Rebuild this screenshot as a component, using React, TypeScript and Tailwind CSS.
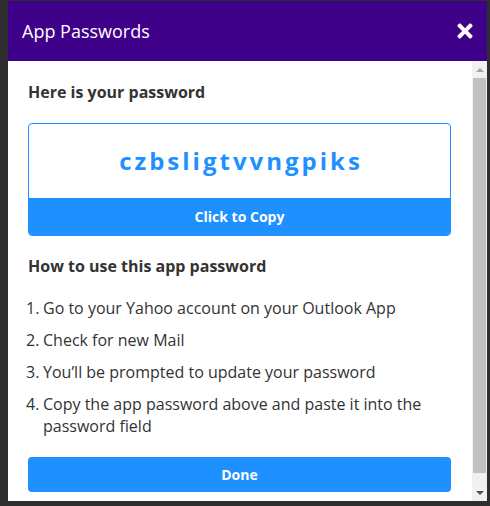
import React from "react";
import { FaTimes } from "react-icons/fa";

const steps = [
  "Go to your Yahoo account on your Outlook App",
  "Check for new Mail",
  "You\u2019ll be prompted to update your password",
  "Copy the app password above and paste it into the password field",
];

export default function App() {
  return (
    <div
      className="w-[490px] h-[506px] bg-[#2e2e2e] pt-px pl-[8px] overflow-hidden"
      style={{ fontFamily: '"Open Sans", "Liberation Sans", sans-serif' }}
    >
      <div className="w-[479px] h-[500px] flex flex-col bg-white">
        <div className="h-[60px] bg-[#3f008a] flex items-center justify-between pl-[14px] pr-[13px]">
          <span className="text-white text-[18px] leading-none">App Passwords</span>
          <FaTimes className="text-white w-[18px] h-[22px]" />
        </div>
        <div className="flex flex-1 min-h-0">
          <div className="flex-1 pl-[20px] pr-[21px] pt-[19px] overflow-hidden text-[#333]">
            <div className="text-[16px] leading-[24px] font-bold">Here is your password</div>
            <div className="mt-[19px] border border-[#1e90ff] rounded-[4px] overflow-hidden">
              <div className="h-[74px] flex items-center justify-center text-[#1e90ff] font-bold text-[24px] tracking-[3px] pl-[3px]">
                czbsligtvvngpiks
              </div>
              <div className="h-[37px] bg-[#1e90ff] text-white font-bold text-[14px] flex items-center justify-center">
                Click to Copy
              </div>
            </div>
            <div className="mt-[18px] text-[16px] leading-[24px] font-bold">How to use this app password</div>
            <div className="mt-[19px] flex flex-col gap-[10px]">
              {steps.map((s, i) => (
                <div key={i} className="flex text-[16px] leading-[22px]">
                  <span className="w-[17px] shrink-0 -ml-[2px]">{i + 1}.</span>
                  <span>{s}</span>
                </div>
              ))}
            </div>
            <div className="mt-[20px] h-[35px] rounded-[4px] bg-[#1e90ff] text-white font-bold text-[14px] flex items-center justify-center">
              Done
            </div>
          </div>
          <div className="w-[15px] bg-[#f1f1f1] flex flex-col items-center">
            <div className="h-[17px] flex items-center justify-center">
              <div className="w-0 h-0 border-l-[4px] border-r-[4px] border-b-[4px] border-l-transparent border-r-transparent border-b-[#a3a3a3]" />
            </div>
            <div className="w-[13px] h-[395px] bg-[#c1c1c1]" />
            <div className="flex-1" />
            <div className="h-[17px] flex items-center justify-center">
              <div className="w-0 h-0 border-l-[4px] border-r-[4px] border-t-[4px] border-l-transparent border-r-transparent border-t-[#505050]" />
            </div>
          </div>
        </div>
      </div>
    </div>
  );
}
